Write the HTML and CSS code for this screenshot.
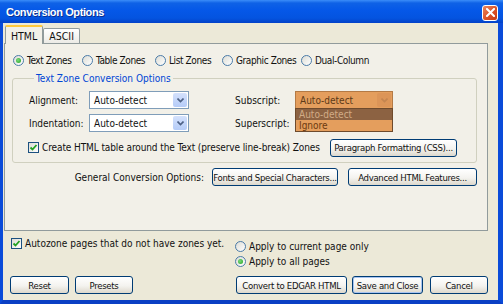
FILE: index.html
```html
<!DOCTYPE html>
<html lang="en">
<head>
  <meta charset="UTF-8" />
  <title>Conversion Options</title>
  <link rel="stylesheet" href="styles.css">
</head>
<body>
<div class="window">
  <!-- Barra de título -->
  <div class="titlebar">
    <span class="title">Conversion Options</span>
    <span class="close">
      <svg width="9" height="9" viewBox="0 0 9 9"><path d="M1 1 L8 8 M8 1 L1 8" stroke="#fff" stroke-width="2" stroke-linecap="square"/></svg>
    </span>
  </div>

  <div class="client">
    <!-- Abas -->
    <div class="tabs">
      <span class="tab active">HTML</span>
      <span class="tab">ASCII</span>
    </div>

    <div class="panel">
      <!-- Tipos de zona -->
      <div class="zones">
        <span class="opt"><i class="radio on"></i>Text Zones</span>
        <span class="opt"><i class="radio"></i>Table Zones</span>
        <span class="opt"><i class="radio"></i>List Zones</span>
        <span class="opt"><i class="radio"></i>Graphic Zones</span>
        <span class="opt"><i class="radio"></i>Dual-Column</span>
      </div>

      <fieldset class="group">
        <legend>Text Zone Conversion Options</legend>
        <div class="row">
          <span class="lbl">Alignment:</span>
          <span class="combo">Auto-detect<span class="arrow"><svg width="7" height="5" viewBox="0 0 7 5"><path d="M0.5 0.5 L3.5 3.5 L6.5 0.5" fill="none" stroke="#4D6185" stroke-width="1.6"/></svg></span></span>
          <span class="lbl lbl-right">Subscript:</span>
          <span class="combo combo-hot">Auto-detect<span class="arrow"><svg width="7" height="5" viewBox="0 0 7 5"><path d="M0.5 0.5 L3.5 3.5 L6.5 0.5" fill="none" stroke="#C48550" stroke-width="1.6"/></svg></span>
            <span class="droplist">
              <span class="item sel">Auto-detect</span>
              <span class="item">Ignore</span>
            </span>
          </span>
        </div>
        <div class="row">
          <span class="lbl">Indentation:</span>
          <span class="combo">Auto-detect<span class="arrow"><svg width="7" height="5" viewBox="0 0 7 5"><path d="M0.5 0.5 L3.5 3.5 L6.5 0.5" fill="none" stroke="#4D6185" stroke-width="1.6"/></svg></span></span>
          <span class="lbl lbl-right">Superscript:</span>
        </div>
        <div class="row row-check">
          <span class="opt"><i class="check on"><svg width="9" height="9" viewBox="0 0 9 9"><path d="M1.5 4.5 L3.5 6.5 L7.5 2" fill="none" stroke="#21A121" stroke-width="1.8"/></svg></i>Create HTML table around the Text (preserve line-break) Zones</span>
          <span class="btn w-para">Paragraph Formatting (CSS)...</span>
        </div>
      </fieldset>

      <div class="general">
        <span>General Conversion Options:</span>
        <span class="btn w-fonts">Fonts and Special Characters...</span>
        <span class="btn w-adv">Advanced HTML Features...</span>
      </div>
    </div>

    <!-- Opções inferiores -->
    <div class="bottom">
      <span class="opt autozone"><i class="check on"><svg width="9" height="9" viewBox="0 0 9 9"><path d="M1.5 4.5 L3.5 6.5 L7.5 2" fill="none" stroke="#21A121" stroke-width="1.8"/></svg></i>Autozone pages that do not have zones yet.</span>
      <div class="apply">
        <span class="opt"><i class="radio"></i>Apply to current page only</span>
        <span class="opt"><i class="radio on"></i>Apply to all pages</span>
      </div>
    </div>

    <div class="buttons">
      <span class="btn w-reset">Reset</span>
      <span class="btn w-presets">Presets</span>
      <span class="btn w-convert">Convert to EDGAR HTML</span>
      <span class="btn w-save default">Save and Close</span>
      <span class="btn w-cancel">Cancel</span>
    </div>
  </div>
</div>
</body>
</html>
```

FILE: styles.css
```css
/* Estilo geral */
body {
  margin: 0;
  font-family: 'DejaVu Sans Condensed', 'Liberation Sans', Arial, sans-serif;
  font-size: 10px;
  color: #111;
}

.window {
  width: 503px;
  height: 304px;
  display: flex;
  flex-direction: column;
}

/* Barra de título azul */
.titlebar {
  height: 23px;
  flex: none;
  display: flex;
  align-items: center;
  justify-content: space-between;
  padding: 0 5px 0 6px;
  background: linear-gradient(#3B8DF9 0, #0F62E6 3px, #0558E8 10px, #0454E0 18px, #0342C8 23px);
}

.title {
  color: #fff;
  font-family: 'Liberation Sans', Arial, sans-serif;
  font-weight: bold;
  font-size: 11px;
  letter-spacing: -0.4px;
  text-shadow: 1px 1px 0 #0A2F8F;
}

.close {
  width: 16px;
  height: 16px;
  box-sizing: border-box;
  border: 1px solid #fff;
  border-radius: 3px;
  background: linear-gradient(135deg, #E9875F, #D94E24 60%, #C43B16);
  display: flex;
  align-items: center;
  justify-content: center;
  margin-top: 2px;
}

/* Área interna com a moldura azul */
.client {
  flex: 1;
  background: #ECE9D8;
  border-left: 3px solid #0A4BD9;
  border-right: 5px solid #0A4BD9;
  border-bottom: 4px solid #0A3FC4;
  display: flex;
  flex-direction: column;
}

/* Abas */
.tabs {
  display: flex;
  align-items: flex-end;
  height: 20px;
  padding-left: 2px;
}

.tab {
  height: 14px;
  padding: 0 5px;
  border: 1px solid #919B9C;
  border-bottom: none;
  border-radius: 2px 2px 0 0;
  background: linear-gradient(#FFFFFF, #ECEBE6);
  line-height: 14px;
  font-size: 10.5px;
}

.tab.active {
  height: 17px;
  line-height: 18px;
  border-top: 2px solid #FFC83C;
  background: #F2F0E8;
  margin-bottom: -1px;
  position: relative;
  z-index: 1;
}

.panel {
  height: 188px;
  box-sizing: border-box;
  margin: 0 10px 0 1px;
  border: 1px solid #919B9C;
  background: #F2F0E8;
  padding: 10px 10px 0 8px;
}

/* Opções com rádio e caixa de seleção */
.opt {
  display: inline-flex;
  align-items: center;
  gap: 3px;
  white-space: nowrap;
}

.radio, .check {
  width: 11px;
  height: 11px;
  box-sizing: border-box;
  border: 1px solid #4A7BA8;
  background: linear-gradient(135deg, #DCDCD5, #FFFFFF);
  position: relative;
  flex: none;
}

.radio {
  border-radius: 50%;
}

.radio.on::after {
  content: '';
  position: absolute;
  left: 2px;
  top: 2px;
  width: 5px;
  height: 5px;
  border-radius: 50%;
  background: radial-gradient(circle at 40% 40%, #7BDA7B, #21A121);
}

.check {
  border-color: #1C5180;
  display: flex;
  align-items: center;
  justify-content: center;
}

.zones {
  display: flex;
  height: 13px;
  align-items: center;
  letter-spacing: -0.4px;
}

.zones .opt:nth-child(1) { width: 69px; }
.zones .opt:nth-child(2) { width: 73px; }
.zones .opt:nth-child(3) { width: 67px; }
.zones .opt:nth-child(4) { width: 79px; }

/* Quadro de opções de texto */
.group {
  margin: 5px 0 0 -1px;
  padding: 6px 19px 5px 16px;
  border: 1px solid #D0D0BF;
  border-radius: 3px;
}

.group legend {
  color: #0046D5;
  padding: 0 2px;
  margin-left: 5px;
  line-height: 13px;
}

.row {
  display: flex;
  align-items: center;
  height: 18px;
}

.row + .row {
  margin-top: 5px;
}

.row-check {
  margin-left: -1px;
  justify-content: space-between;
  height: 19px;
  letter-spacing: -0.1px;
}

.row + .row-check {
  margin-top: 6px;
}

.lbl {
  width: 60px;
}

.lbl-right {
  margin-left: 46px;
}

.combo {
  width: 100px;
  height: 18px;
  box-sizing: border-box;
  border: 1px solid #7F9DB9;
  background: #fff;
  display: flex;
  align-items: center;
  justify-content: space-between;
  padding-left: 4px;
}

.combo .arrow {
  width: 14px;
  height: 14px;
  margin-right: 1px;
  border-radius: 2px;
  background: linear-gradient(#D4E1FC, #B5CCF8);
  display: flex;
  align-items: center;
  justify-content: center;
}

/* Combo destacado (aberto) */
.combo-hot {
  width: 98px;
  position: relative;
  background: #E49E5D;
  border-color: #B47A45;
  color: #5C3A18;
}

.combo-hot .arrow {
  background: #DC9558;
}

.droplist {
  position: absolute;
  top: 16px;
  left: -1px;
  right: -1px;
  border: 1px solid #6E4A2C;
  background: #E49E5D;
  display: flex;
  flex-direction: column;
}

.droplist .item {
  height: 11px;
  line-height: 11px;
  padding-left: 3px;
  color: #6B3A10;
}

.droplist .item.sel {
  background: #8C6242;
  color: #D2AC86;
}

/* Botões estilo XP */
.btn {
  height: 18px;
  box-sizing: border-box;
  border: 1px solid #003C74;
  border-radius: 3px;
  background: linear-gradient(#FFFFFF, #F4F3EF 55%, #DDD8CC);
  display: inline-flex;
  align-items: center;
  justify-content: center;
  white-space: nowrap;
  font-size: 9.5px;
  letter-spacing: -0.3px;
}

.btn.default {
  box-shadow: inset 0 0 0 1px #A8C4F0;
}

.w-para { width: 127px; }
.w-fonts { width: 126px; }
.w-adv { width: 129px; margin-left: 10px; }
.w-reset { width: 59px; }
.w-presets { width: 58px; margin-left: 6px; }
.w-convert { width: 111px; margin-left: 103px; }
.w-save { width: 71px; margin-left: 5px; }
.w-cancel { width: 58px; margin-left: 7px; }

.general {
  display: flex;
  align-items: center;
  justify-content: flex-end;
  margin-top: 5px;
}

.general .w-fonts {
  margin-left: 8px;
}

/* Parte de baixo */
.bottom {
  display: flex;
  height: 39px;
  margin-top: 6px;
  padding-left: 8px;
}

.autozone {
  width: 224px;
  height: 13px;
}

.apply {
  display: flex;
  flex-direction: column;
  gap: 2px;
  margin-top: 3px;
}

.apply .opt {
  height: 13px;
}

.buttons {
  display: flex;
  padding-left: 7px;
}
```
